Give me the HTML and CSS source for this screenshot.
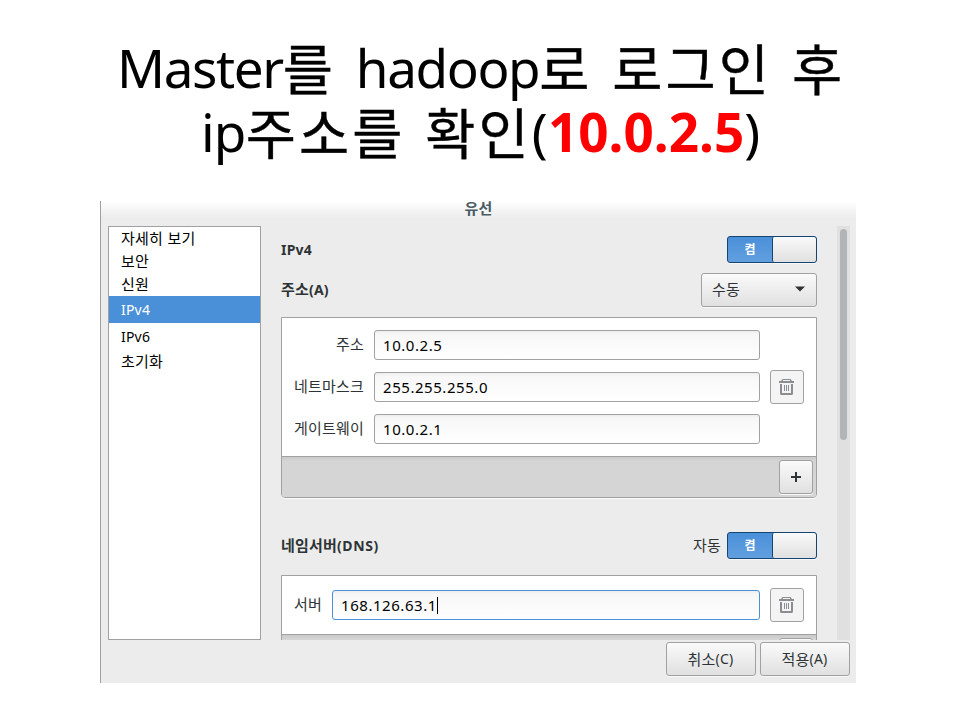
FILE: index.html
```html
<!DOCTYPE html>
<html lang="ko">
<head>
<meta charset="utf-8">
<title>유선</title>
<link rel="stylesheet" href="styles.css">
</head>
<body>
<svg class="defs" aria-hidden="true">
  <symbol id="trash" viewBox="0 0 16 16">
    <path d="M0 2h15v2H0zM2 2L3.500 0h8L13 2h-2V1H4v1z"/>
    <path d="M1 5h2v9h9V5h2v9.500q0 1.500-1.500 1.500h-10Q1 16 1 14.500z"/>
    <path d="M5 6h1v6H5zM7 6h1v6H7zM9 6h1v6H9z"/>
  </symbol>
</svg>
<h1 class="headline">
  <span class="line"><span class="lat">Master</span>를 <span class="lat">hadoop</span>로 로그인 후</span>
  <span class="line second"><span class="lat ip">ip</span>주소를 확인<span class="lat par">(</span><b>10.0.2.5</b><span class="lat par">)</span></span>
</h1>
<div class="dialog">
  <header class="titlebar">유선</header>
  <div class="body">
    <ul class="sidebar">
      <li>자세히 보기</li>
      <li>보안</li>
      <li>신원</li>
      <li class="tall selected">IPv4</li>
      <li class="tall">IPv6</li>
      <li>초기화</li>
    </ul>
    <div class="content">
      <div class="row"><span class="heading latin">IPv4</span><div class="switch"><span>켬</span><i></i></div></div>
      <div class="row method"><span class="heading">주소<span class="latin">(A)</span></span><div class="button combo"><span>수동</span><svg width="10" height="6" viewBox="0 0 10 6"><path d="M0 .5h10L5 5.500z"/></svg></div></div>
      <div class="box">
        <div class="entries">
          <div class="fields">
            <label>주소</label><div class="input">10.0.2.5</div>
            <label>네트마스크</label><div class="input">255.255.255.0</div>
            <label>게이트웨이</label><div class="input">10.0.2.1</div>
          </div>
          <div class="button square flat"><svg width="16" height="16"><use href="#trash"/></svg></div>
        </div>
        <div class="toolbar"><div class="button square"><svg width="12" height="12" viewBox="0 0 12 12"><path d="M5 1h2v4h4v2H7v4H5V7H1V5h4z"/></svg></div></div>
      </div>
      <div class="row dns"><span class="heading">네임서버<span class="latin wide">(DNS)</span></span><div class="auto"><span>자동</span><div class="switch"><span>켬</span><i></i></div></div></div>
      <div class="box">
        <div class="entries server">
          <div class="fields">
            <label>서버</label><div class="input focus">168.126.63.1<i class="caret"></i></div>
          </div>
          <div class="button square flat"><svg width="16" height="16"><use href="#trash"/></svg></div>
        </div>
        <div class="toolbar"><div class="button square"></div></div>
      </div>
    </div>
    <div class="track"><div class="thumb"></div></div>
  </div>
  <footer class="actions">
    <div class="button action">취소<span class="latin">(C)</span></div>
    <div class="button action">적용<span class="latin">(A)</span></div>
  </footer>
</div>
</body>
</html>
```
FILE: styles.css
```css
* { box-sizing: border-box; }
body {
  margin: 0;
  width: 960px;
  height: 720px;
  overflow: hidden;
  background: #fff;
  font: 15px/22px "Noto Sans CJK KR", sans-serif;
  letter-spacing: .2px;
  color: #2e3436;
}
.defs { display: none; }
svg { fill: currentColor; display: block; }

.headline {
  margin: 0;
  height: 201px;
  padding-top: 35px;
  font-size: 54.5px;
  font-weight: 400;
  line-height: 64px;
  letter-spacing: 3.100px;
  color: #000;
  -webkit-text-stroke: .4px currentColor;
}
.line {
  display: block;
  height: 64px;
  padding-left: 117px;
  white-space: nowrap;
  word-spacing: 1.500px;
}
.line.second { padding-left: 201px; }
.lat, .headline b {
  font-family: "Noto Sans", sans-serif;
  font-size: 53px;
  line-height: 0;
  vertical-align: 2px;
  -webkit-text-stroke: 0;
}
.lat { letter-spacing: -1.400px; }
.ip { letter-spacing: -.8px; }
.par { letter-spacing: .3px; }
.headline b {
  font-weight: 700;
  letter-spacing: 0;
  color: #f00;
}

.dialog {
  width: 756px;
  height: 482px;
  margin-left: 100px;
  border-left: 1px solid #a1a1a1;
  background: linear-gradient(#fff, #ececec 17px);
}
.titlebar {
  height: 25px;
  line-height: 14px;
  text-align: center;
  font-weight: 700;
  color: #4a5c64;
}
.body {
  display: flex;
  height: 414px;
  padding: 0 6px 0 7px;
}
.sidebar {
  width: 153px;
  margin: 0;
  padding: 0;
  list-style: none;
  background: #fff;
  border: 1px solid #a1a1a1;
  color: #000;
}
.sidebar li { height: 23px; line-height: 22px; padding-left: 12px; }
.sidebar .tall { height: 27px; line-height: 27px; font-family: "Noto Sans", sans-serif; font-size: 14px; }
.sidebar .selected { background: #4a90d9; color: #fff; }
.latin { font-family: "Noto Sans", sans-serif; font-size: 14px; }
.wide { letter-spacing: .6px; }

.content {
  width: 536px;
  margin: 0 20px;
  padding-top: 10px;
  overflow: hidden;
}
.row {
  display: flex;
  justify-content: space-between;
  align-items: center;
  height: 27px;
}
.heading { font-weight: 700; }
.method { height: 34px; margin: 10px 0; }
.method .heading { padding-bottom: 2px; }
.dns { margin: 34px 0 16px; }
.auto { display: flex; align-items: center; gap: 6px; }
.auto > span { padding-bottom: 1px; }

.switch {
  display: flex;
  width: 90px;
  height: 27px;
  border: 1px solid #184472;
  border-radius: 3px;
  background: linear-gradient(#4a90d9, #629fdf);
  box-shadow: 0 1px #f8f8f8;
  overflow: hidden;
}
.switch span {
  width: 44px;
  line-height: 24px;
  text-align: center;
  font-size: 12px;
  font-weight: 700;
  color: #fff;
}
.switch i {
  flex: 1;
  border-left: 1px solid #184472;
  border-radius: 2px;
  background: linear-gradient(#fafafa, #e0e0e0);
}

.button {
  display: flex;
  align-items: center;
  justify-content: center;
  height: 34px;
  border: 1px solid #a1a1a1;
  border-radius: 3px;
  background: linear-gradient(#fafafa, #e0e0e0);
  box-shadow: 0 1px #f8f8f8;
}
.combo { width: 116px; justify-content: space-between; padding: 0 11px 2px 10px; }
.square { width: 34px; }
.flat { background: #f4f4f4; color: #8b8e8f; box-shadow: none; }
.action { width: 90px; padding-right: 1px; padding-bottom: 1px; }

.box {
  border: 1px solid #a1a1a1;
  border-radius: 0 0 4px 4px;
  background: #fff;
  box-shadow: 0 1px #fafafa;
}
.entries {
  display: flex;
  align-items: center;
  justify-content: space-between;
  height: 138px;
  padding: 0 12px;
}
.fields {
  display: grid;
  grid-template-columns: 70px 386px;
  gap: 12px 10px;
}
.fields label { text-align: right; line-height: 28px; white-space: nowrap; }
.server { height: 58px; }
.server .fields { grid-template-columns: 28px 428px; }
.input {
  display: flex;
  align-items: center;
  height: 30px;
  padding-left: 8px;
  border: 1px solid #a1a1a1;
  border-radius: 3px;
  background: linear-gradient(#ededed, #f7f7f7 3px, #fff);
  font-family: "Noto Sans", sans-serif;
  font-size: 15px;
  letter-spacing: .55px;
  color: #000;
}
.input.focus { border-color: #4a90d9; }
.caret { width: 1px; height: 17px; background: #000; }
.toolbar {
  display: flex;
  justify-content: flex-end;
  height: 41px;
  padding: 3px;
  border-top: 1px solid #a1a1a1;
  border-radius: 0 0 3px 3px;
  background: linear-gradient(#c9c9c9, #d5d5d5 4px);
}

.track { width: 13px; padding: 3px 3px 0; background: #e0e0e0; }
.thumb { width: 7px; height: 211px; border-radius: 4px; background: #b2b4b6; }
.actions {
  display: flex;
  justify-content: flex-end;
  gap: 4px;
  padding: 2px 6px 0 0;
}
```
